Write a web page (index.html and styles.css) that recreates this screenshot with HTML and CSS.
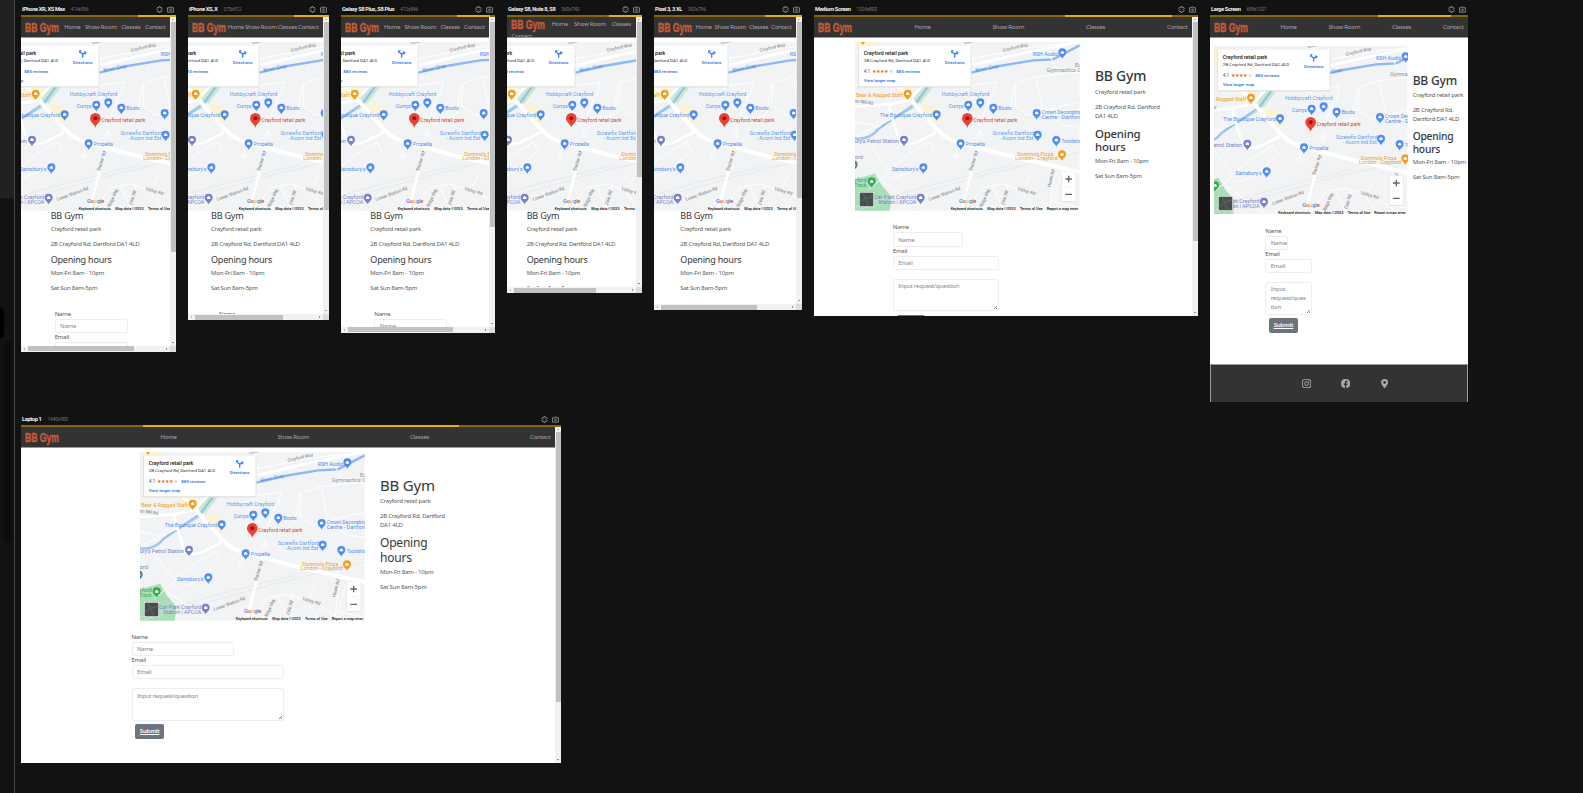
FILE: index.html
```html
<!DOCTYPE html>
<html lang="en">
<head>
<meta charset="utf-8">
<title>BB Gym - responsive preview</title>
<link rel="stylesheet" href="styles.css">
</head>
<body>
<div class="app">
  <aside class="rail">
    <div class="rail-top"></div>
    <div class="rail-tab"></div>
    <div class="rail-scroll"></div>
  </aside>
  <main class="screens">
    <div class="row" id="row-1"></div>
    <div class="row" id="row-2"></div>
  </main>
</div>
<script src="app.js"></script>
</body>
</html>
```

FILE: styles.css
```css
* { box-sizing: border-box; }
body {
  margin: 0;
  background: #121212;
  color: #212529;
  font-family: "Noto Sans", sans-serif;
  font-size: 6.02px;
  line-height: 9px;
  letter-spacing: -0.034em;
}
.app { display: flex; width: 1583px; height: 793px; overflow: hidden; }
.rail { width: 15px; flex: none; border-right: 1px solid #484848; }
.rail-top { height: 198px; background: #212121; }
.rail-tab { width: 4px; height: 30px; margin-top: 110px; background: #000; border-radius: 0 4px 4px 0; }
.rail-scroll { width: 8px; height: 202px; margin: 3px 0 0 4px; background: #0c0c0c; border-radius: 4px; }
.screens { padding-left: 6px; display: flex; flex-direction: column; }
.row { flex: none; display: flex; gap: 12px; align-items: flex-start; height: 410px; }
.screen { flex: none; }
.bar { height: 15px; padding: 4px 2px 0 1px; display: flex; align-items: center; color: #f2f2f2; font-family: Roboto, sans-serif; }
.bar b { font-size: 5.7px; font-weight: 700; letter-spacing: -0.35px; white-space: nowrap; }
.bar span { margin-left: 6px; font-size: 4.8px; color: #777; letter-spacing: -0.1px; flex: 1; }
.bar svg { width: 7px; height: 7px; margin-left: 4.2px; fill: none; stroke: #b5b5b5; stroke-width: 2.4; }
.load { height: 2.4px; background: #876507; }
.load i { display: block; height: 100%; background: #e6ac16; }
.view { display: grid; grid-template-columns: minmax(0, 1fr) auto; grid-template-rows: minmax(0, 1fr) auto; background: #fff; }
.page { overflow: hidden; min-width: 0; }
.vs { width: 6px; background: #f1f1f1; display: flex; flex-direction: column; align-items: center; padding-bottom: 2px; }
.vs i { width: 5px; background: #c1c1c1; margin-top: 2.5px; }
.hs { height: 6px; background: #f1f1f1; display: flex; align-items: center; padding-right: 2px; }
.hs i { height: 5px; background: #c1c1c1; margin-left: 3.6px; }
.corner { background: #dcdcdc; }
.tri { width: 2px; height: 2px; flex: none; }
.up { border: 1px solid transparent; border-bottom-color: #777; margin-top: 0.5px; }
.down { border: 1px solid transparent; border-top: 1.6px solid #333; margin-top: auto; }
.left { border: 1px solid transparent; border-right-color: #777; margin-left: 1.5px; }
.right { border: 1px solid transparent; border-left: 1.6px solid #333; margin-left: auto; }
.nav { height: 21px; padding: 0 4.6px 0 4.4px; background: #333; border-bottom: 1.2px solid #999; display: flex; align-items: center; justify-content: space-between; color: #a9a7a7; white-space: nowrap; overflow: hidden; }
.nav.wrap { flex-wrap: wrap; align-content: flex-start; padding-right: 5px; column-gap: 5px; }
.logo { width: 34.3px; height: 14.5px; flex: none; overflow: visible; }
.logo text { font-family: "Liberation Sans Narrow", "Liberation Sans", sans-serif; font-weight: 700; font-size: 12.8px; fill: #c25a39; stroke: #c25a39; stroke-width: 0.55; letter-spacing: 0; }
.map { display: block; flex: none; height: 168.67px; }
.map text { font-family: Roboto, sans-serif; font-weight: 400; font-size: 14px; letter-spacing: 0; }
.map .strong text { font-weight: 500; }
.place { display: flex; padding-top: 3.6px; }
.phone .place { display: block; }
h2, h3, p { margin: 0; font-weight: 400; }
h2, h3 { line-height: 1.2; margin-bottom: 3px; color: #33373b; }
p { margin-bottom: 6px; color: #55595d; }
.info { white-space: nowrap; }
.form { color: #55595d; }
.form label { display: block; }
.field { height: 14.3px; border: 0.8px solid #eceef0; border-radius: 1.8px; padding: 2.3px 4.4px; color: #84898e; overflow: hidden; }
.area { position: relative; height: 32.4px; margin-top: 9px; }
.area::after { content: ""; position: absolute; right: 1px; bottom: 1px; width: 3px; height: 3px; background: linear-gradient(135deg, transparent 45%, #888 45%, #888 60%, transparent 60%, transparent 75%, #888 75%); }
.submit { width: 28.7px; height: 14.6px; margin: 3.6px 0 0 3.8px; border-radius: 2px; background: #6c757d; color: #fff; text-align: center; line-height: 14px; font-weight: 600; text-decoration: underline; }
.foot { height: 39px; border: 1px solid #999; border-width: 1px 0.5px; background: #333; display: flex; justify-content: center; align-items: center; gap: 30.2px; padding-left: 13px; }
.foot svg { width: 9.2px; height: 9.2px; fill: #aaa; }
```

FILE: app.js
```js
// Points on the map: x, y of the pin's centre, colour.
const BLUE = '#4f8df5', ORANGE = '#f29d1b', PURPLE = '#7a80c8', GREEN = '#34a853';
const pins = [[638,51,BLUE],[174,175,ORANGE],[356,208,BLUE],[392,201,BLUE],[431,217,BLUE],[561,233,BLUE],[261,237,BLUE],[163,313,PURPLE],
  [564,298,BLUE],[620,314,BLUE],[333,324,BLUE],[637,357,ORANGE],[221,396,BLUE],[66,438,GREEN],[213,487,PURPLE],[12,388,'#607d8b']];
// Labels: x, y, width, text, colour, rotation.
const labels = [
  [549,61,76,'RSH Audio',BLUE],[676,94,26,'Eur','#8a9499'],[591,109,112,'Gymnastics Ce','#8a9499'],
  [20,185,140,'Bear & Ragged Staff',ORANGE],[276,183,143,'Hobbycraft Crayford','#5c9df5'],[297,218,45,'Currys',BLUE],[446,225,40,'Boots',BLUE],
  [90,246,158,'The Boutique Crayford',BLUE],[371,260,132,'Crayford retail park','#d93a32'],[576,235,120,'Crown Decorating',BLUE],[576,250,120,'Centre - Dartford',BLUE],
  [6,322,142,'bury\'s Petrol Station',PURPLE],[429,300,124,'Screwfix Dartford','#5c9df5'],[449,315,102,'- Acorn Ind Est','#5c9df5'],[636,322,62,'Toolstation',BLUE],
  [348,333,58,'Propella',BLUE],[503,361,108,'Domino\'s Pizza',ORANGE],[497,375,127,'London - Crayford',ORANGE],[127,406,79,'Sainsbury\'s',BLUE],
  [0,371,40,'yford','#78909c'],[14,440,37,'yford',GREEN],[14,454,37,'Track',GREEN],[74,491,126,'Car Park Crayford',PURPLE],[86,505,114,'Station | APCOA',PURPLE],
  [460,50,78,'Crayford Way','#777',-13],[378,110,72,'River Cray','#4285d5',-12],[344,27,52,'Green Way','#777',-12],[8,200,62,'Iron Mill Rd','#777',8],
  [367,408,62,'Station Rd','#666',-72],[239,497,100,'Lower Station Rd','#777',-20],[398,516,58,'Ridge Way','#777',-66],[462,510,46,'Dale Rd','#777',-72],
  [502,464,56,'Valley Rd','#777',16],[602,456,54,'Heath Rd','#777',-75]
];
const text = ([x, y, w, t, c, r = 0]) =>
  `<text x="${x}" y="${y}" textLength="${w}" lengthAdjust="spacingAndGlyphs" fill="${c}" transform="rotate(${r} ${x} ${y})">${t.replace('&', '&amp;')}</text>`;
const pin = ([x, y, c]) =>
  `<path fill="${c}" d="M${x} ${y + 20}c-2-8-12-11-12-20a12 12 0 0 1 24 0c0 9-10 12-12 20z"/><path d="M${x - 5} ${y + 4}v-5l5-4 5 4v5z" fill="#fff"/>`;

// W is the map's width in thirds of a pixel; the town is centred, controls keep to the edges.
function map(W, style = '') {
  const right = W - 674 - 16;
  return `<svg class="map" width="${W / 3}" viewBox="0 0 ${W} 506" style="${style}">
  <rect width="${W}" height="506" fill="#f1f3f4"/>
  <g transform="translate(${(W - 674) / 2 - 16} -20)">
    <path fill="#fdf3d3" d="M16 20h60l20 30 65 95 50 35-40 20-55-55z M215 205l50 10 10 40-30 15-25-30z"/>
    <path fill="#cbe8d5" d="M220 150l30 5-38 50-22-12z"/>
    <path fill="#a9dfb7" d="M16 432l60-17 20 35 30 35-6 41H16z"/>
    <g fill="none" stroke="#e1e4e7" stroke-width="2">
      <path d="M16 526L240 465 420 415 690 350M16 515L260 445 480 390"/>
    </g>
    <g fill="none" stroke="#8cb7f8" stroke-width="7">
      <path d="M365 112l85-20 100-17 60-3 80-42"/>
      <path stroke-width="7" stroke="#9dc2f6" d="M16 309q45 5 70-28l110-75 45-60"/>
      <path stroke-width="2" stroke="#7fcb91" d="M95 270l100-55 40-60"/>
    </g>
    <g fill="none" stroke="#fff" stroke-width="3">
      <path d="M300 80l120-20 90-20 180-20M370 80l-10-60M430 180l10-40-70 10-45 30M425 180l-25 60 40 20 40-25 15-90 60-20 130-15M500 150l-5 60 40 30 110-30 45-10M600 60l20 40 70 15M560 130l20 100 60 40 50 5M16 260l60 10 50-60M20 300l110-50M60 330l60 75 60-50 60-35 15 25-70 65-60 20M120 410l-60 50M100 440l120 86M390 300v-20M390 290a8 8 0 1 0 .1 0M330 325l-12 30a6 6 0 1 0 1 0M345 526l55-70 60-10 90 30 60 40M430 455l30 65M475 450l-20 76M520 465l25-45M600 526l15-125M640 400l-30 100 80 15M560 526l-40-50"/>
    </g>
    <g fill="none" stroke="#fff" stroke-linejoin="round">
      <path stroke-width="8" d="M16 215l100-8 60-12 50-50M116 207l18 60 15 50q15 15 50 5l50-25 20-15M385 340l-25 90-25 96M365 90l150-35 175-35"/>
      <path stroke-width="12" d="M80 80l100 110 80 90q30 35 80 45l150 40 200 45"/>
    </g>
    <path fill="#f29d1b" d="M34 20h12l-6 9z"/>
    ${pins.map(pin).join('')}
    <path fill="#ea4335" d="M353 277c-3-12-16-16-16-28a16 16 0 0 1 32 0c0 12-13 16-16 28z"/><circle cx="353" cy="249" r="6" fill="#a50e0e"/>
    ${labels.map(text).join('')}
    <g class="strong"><text x="328" y="503" textLength="52" style="font-size:17px"><tspan fill="#4285f4">G</tspan><tspan fill="#ea4335">o</tspan><tspan fill="#fbbc04">o</tspan><tspan fill="#4285f4">g</tspan><tspan fill="#34a853">l</tspan><tspan fill="#ea4335">e</tspan></text></g>
  </g>
  <g transform="translate(-16 -20)">
    <rect x="26" y="32" width="339" height="124" fill="#d8dadc"/><rect x="28" y="32" width="335" height="121" fill="#fff"/>
    <g class="strong">${text([42,59,134,'Crayford retail park','#111'])}</g>
    ${text([42,80,200,'2B Crayford Rd, Dartford DA1 4LD','#333']).replace('<text', '<text style="font-size:11.5px"')}
    ${text([42,112,20,'4.1','#555'])}${text([68,113,48,'★★★★','#e7711b'])}${text([117,113,10,'★','#ccc'])}
    <g class="strong">${[[140,112,72,'880 reviews','#1a73e8'],[42,140,95,'View larger map','#1a73e8'],[285,86,60,'Directions','#1a73e8']].map(text).join('').replaceAll('<text', '<text style="font-size:11.5px"')}</g>
    <path d="M315 67V57l-8-8M315 59q0-6 9-6" stroke="#4285f4" stroke-width="4" fill="none"/><path d="M304 45h9l-9 9zM320 46l8 6-8 7z" fill="#4285f4"/>
    <rect x="28" y="470" width="45" height="45" fill="#fff"/><rect x="30" y="472" width="41" height="41" fill="#46504b"/><path d="M30 502l15-12 26-8M40 472l8 18 10 23" stroke="#5d6862" stroke-width="3" fill="none"/>
  </g>
  <g transform="translate(${right} -20)">
    <rect x="636" y="409" width="43" height="91" rx="2" fill="#dadcde"/><rect x="637" y="409" width="41" height="89" rx="2" fill="#fff"/>
    <path d="M643 454h29" stroke="#e6e6e6" stroke-width="1.5"/><path d="M647 431h20M657 421v20M647 477h20" stroke="#666" stroke-width="4"/>
    <rect x="300" y="514" width="390" height="12" fill="#f6f7f7"/>
    <g class="strong">${[[303,96,'Keyboard shortcuts'],[413,85,'Map data ©2023'],[511,68,'Terms of Use'],[591,94,'Report a map error']].map(([x, w, t]) => text([x, 524, w, t, '#111']).replace('<text', '<text style="font-size:10px"')).join('')}</g>
  </g></svg>`;
}

const logo = '<svg class="logo" viewBox="0 0 34.3 14.5"><text x="0" y="11.9" textLength="34" lengthAdjust="spacingAndGlyphs">BB Gym</text></svg>';
const gear = '<svg viewBox="0 0 24 24"><path d="M10 2h4l1 4 4-1 2 4-3 3 3 3-2 4-4-1-1 4h-4l-1-4-4 1-2-4 3-3-3-3 2-4 4 1z"/></svg>';
const camera = '<svg viewBox="0 0 24 24"><path d="M2 6h6l2-3h4l2 3h6v15H2z"/><circle cx="12" cy="13" r="3"/></svg>';
const icons = `
  <svg viewBox="0 0 16 16"><path fill-rule="evenodd" d="M5 0h6a5 5 0 0 1 5 5v6a5 5 0 0 1-5 5H5a5 5 0 0 1-5-5V5a5 5 0 0 1 5-5zm0 1.5A3.5 3.5 0 0 0 1.500 5v6A3.500 3.500 0 0 0 5 14.500h6a3.500 3.500 0 0 0 3.500-3.500V5A3.500 3.500 0 0 0 11 1.500zM8 4a4 4 0 1 1 0 8 4 4 0 0 1 0-8zm0 1.500a2.500 2.500 0 1 0 0 5 2.500 2.500 0 0 0 0-5zM12.300 2.700a1 1 0 1 1 0 2 1 1 0 0 1 0-2z"/></svg>
  <svg viewBox="0 0 16 16"><path d="M16 8.050a8 8 0 1 0-9.250 7.900v-5.600H4.720V8.050h2.030V6.280c0-2 1.200-3.120 3.020-3.120.88 0 1.790.16 1.790.16v1.980h-1c-1 0-1.300.62-1.300 1.250v1.500h2.210l-.35 2.300H9.250v5.600A8 8 0 0 0 16 8.050"/></svg>
  <svg viewBox="0 0 16 16"><path fill-rule="evenodd" d="M8 16s6-5.700 6-10A6 6 0 0 0 2 6c0 4.300 6 10 6 10m0-7.600a2.400 2.400 0 1 1 0-4.800 2.400 2.400 0 0 1 0 4.800"/></svg>`;

const screens = [
  { name: 'iPhone XR, XS Max', size: '414x896', w: 155, h: 336.9, load: [117, 38], v: 230, hs: 106, map: -38, text: 29.7, form: 33.7, input: 73 },
  { name: 'iPhone XS, X', size: '375x812', w: 141, h: 305.3, load: [106, 35], v: 188, hs: 88, map: -45, text: 23, form: 31, input: 68 },
  { name: 'Galaxy S8 Plus, S8 Plus', size: '412x846', w: 154, h: 317.8, load: [116, 33], v: 205, hs: 105, map: -38.6, text: 29.3, form: 33.3, input: 73 },
  { name: 'Galaxy S8, Note 8, S8', size: '360x740', w: 135, h: 278.2, load: [102, 33], v: 155, hs: 82, map: -47.6, text: 19.7, form: 24, input: 65, wrap: true },
  { name: 'Pixel 3, 3 XL', size: '393x786', w: 148, h: 295.3, load: [111, 37], v: 176, hs: 96, map: -41.6, text: 26.3, form: 30, input: 70 },
  { name: 'Medium Screen', size: '1024x800', w: 384, h: 300.7, load: [251, 107], v: 219, map: 41.3, W: 674, gap: 15, top: 25.9, h1: 13.9, h2: 11.4, h2w: 500, form: 78.8, formTop: 12.8, input: 70.5, area: 106 },
  { name: 'Large Screen', size: '688x1021', w: 258, h: 387, load: [168, 73], map: 4.3, W: 580, mapTop: 4, gap: 5, top: 28.1, h1: 12.1, h2: 10.25, h2w: 500, form: 55.3, formTop: 12.1, input: 23, area: 46.500, narrow: true, foot: true },
  { name: 'Laptop 1', size: '1440x900', w: 540, h: 338, load: [122, 316], v: 270, map: 119.3, W: 674, gap: 15, top: 24.2, h1: 15.04, h2: 12.03, h2w: 400, form: 110.5, formTop: 12, input: 102, area: 152 }
];

function info(s) {
  const phone = !s.W;
  const address = phone ? '2B Crayford Rd, Dartford DA1 4LD' : s.narrow ? '2B Crayford Rd,<br>Dartford DA1 4LD' : '2B Crayford Rd, Dartford<br>DA1 4LD';
  return `<div class="info" style="${phone ? `padding:0.7px 0 0 ${s.text}px` : `margin-left:${s.gap}px;padding-top:${s.top}px`}">
    <h2 style="font-size:${s.h1 || 9.02}px;font-weight:${s.h2w || 400}">BB Gym</h2><p>Crayford retail park</p><p>${address}</p>
    <h3 style="font-size:${s.h2 || 9.02}px;font-weight:${s.h2w || 400}">Opening${phone ? ' ' : '<br>'}hours</h3><p>Mon-Fri 8am - 10pm</p><p>Sat Sun 8am-5pm</p></div>`;
}

function form(s) {
  const area = s.area || s.input;
  return `<div class="form" style="padding:${s.formTop ?? 11}px 0 0 ${s.form}px">
    <label>Name</label><div class="field" style="width:${s.input}px">Name</div>
    <label>Email</label><div class="field" style="width:${area}px">Email</div>
    <div class="field area" style="width:${area}px">${s.narrow ? 'Input<br>request/ques<br>tion' : 'Input request/question'}</div>
    <div class="submit">Submit</div></div>`;
}

function screen(s) {
  return `<section class="screen ${s.W ? '' : 'phone'}" style="width:${s.w}px">
    <div class="bar"><b>${s.name}</b><span>${s.size}</span>${gear}${camera}</div>
    <div class="load"><i style="width:${s.load[1]}px;margin-left:${s.load[0]}px"></i></div>
    <div class="view" style="height:${s.h - 2.4}px"><div class="page">
      <div class="nav ${s.wrap ? 'wrap' : ''}">${logo}<span>Home</span><span>Show Room</span><span>Classes</span><span>Contact</span></div>
      <div class="place"${s.mapTop ? ` style="padding-top:${3.4 + s.mapTop}px"` : ''}>${map(s.W || 674, `margin-left:${s.map}px`)}${info(s)}</div>
      ${form(s)}
      ${s.foot ? '<div class="foot" style="margin-top:31px">' + icons + '</div>' : ''}
    </div>
    ${s.v ? `<div class="vs"><span class="tri up"></span><i style="height:${s.v}px"></i><span class="tri down"></span></div>` : '<div></div>'}
    ${s.hs ? `<div class="hs"><span class="tri left"></span><i style="width:${s.hs}px"></i><span class="tri right"></span></div><div class="corner"></div>` : ''}
    </div></section>`;
}

document.getElementById('row-1').innerHTML = screens.slice(0, 7).map(screen).join('');
document.getElementById('row-2').innerHTML = screen(screens[7]);
```
